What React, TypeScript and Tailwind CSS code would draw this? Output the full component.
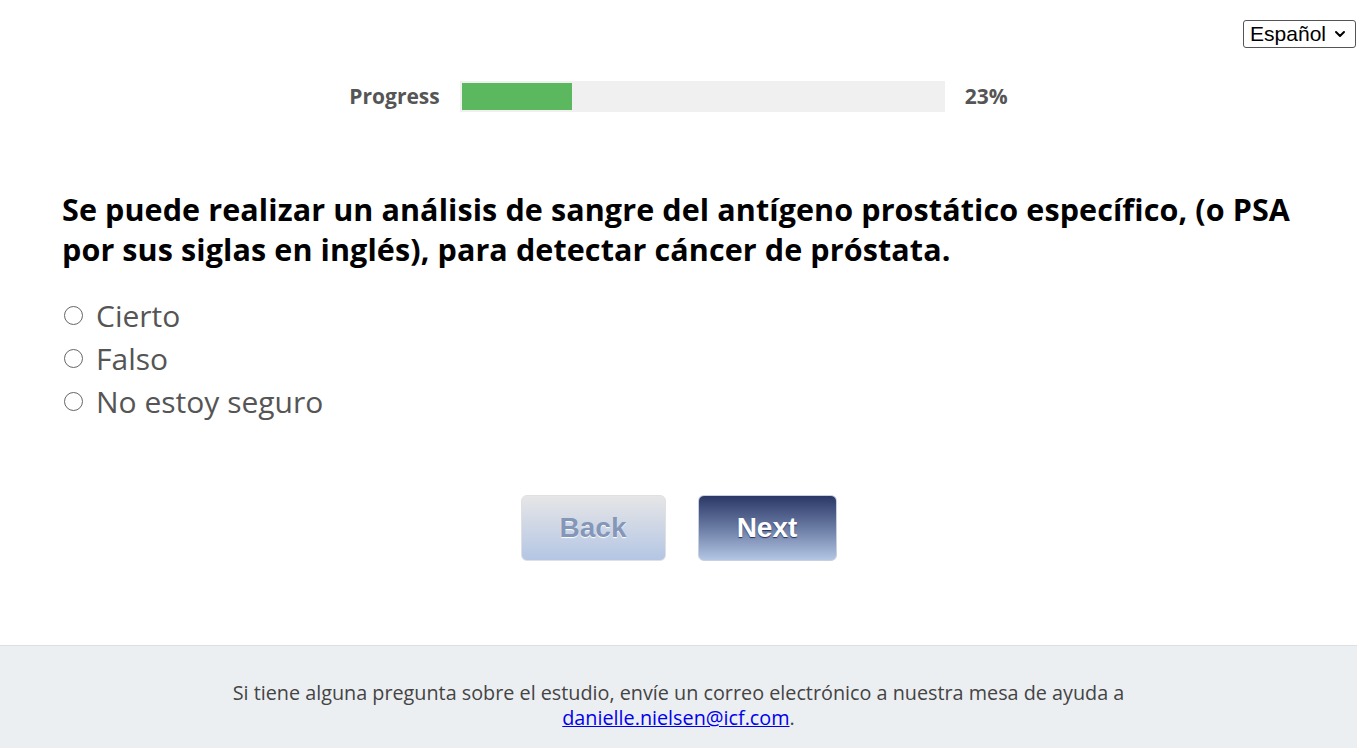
import { ChevronDown } from 'lucide-react'

const options = ['Cierto', 'Falso', 'No estoy seguro']

export default function App() {
  return (
    <div className="min-h-[748px] flex flex-col bg-white" style={{ fontFamily: '"Open Sans", sans-serif' }}>
      <div className="flex justify-end pt-[20px] pr-[1px]">
        <div className="flex items-center gap-[6px] h-[28px] pl-[6px] pr-[7px] border border-[#555] rounded-[3px] text-[21px] text-black" style={{ fontFamily: '"Liberation Sans", Arial, sans-serif' }}>
          Español
          <ChevronDown size={16} strokeWidth={3} />
        </div>
      </div>

      <div className="flex items-center justify-center gap-[20px] mt-[33px]">
        <span className="text-[21px] font-bold text-[#555]">Progress</span>
        <div className="w-[485px] h-[31px] bg-[#f0f0f0] p-[2px]">
          <div className="w-[23%] h-full bg-[#5cb85f]" />
        </div>
        <span className="text-[21px] font-bold text-[#555]">23%</span>
      </div>

      <div className="px-[62px] mt-[76px]">
        <h1 className="text-[30.5px] font-bold leading-[40px] tracking-[0.1px] text-black">
          Se puede realizar un análisis de sangre del antígeno prostático específico, (o PSA por sus siglas en inglés), para detectar cáncer de próstata.
        </h1>
        <div className="mt-[25px] flex flex-col">
          {options.map(o => (
            <label key={o} className="flex items-center h-[43px] text-[30px] text-[#555]">
              <span className="w-[19px] h-[19px] rounded-full border-[1.5px] border-[#666] ml-[2px] mr-[13px]" />
              {o}
            </label>
          ))}
        </div>
      </div>

      <div className="flex justify-center gap-[32px] mt-[72px]">
        <button className="w-[145px] h-[66px] rounded-[6px] border border-[#e0e0e0] bg-gradient-to-b from-[#e6e6e6] to-[#b4c6e4] text-[28px] font-bold text-[#8597b8]" style={{ fontFamily: '"Liberation Sans", Arial, sans-serif', textShadow: '0 1px 1px #fff' }}>
          Back
        </button>
        <button className="w-[139px] h-[66px] rounded-[6px] border border-[#c8d0e0] bg-gradient-to-b from-[#2b3867] to-[#b4c6e4] text-[28px] font-bold text-white" style={{ fontFamily: '"Liberation Sans", Arial, sans-serif', textShadow: '0 1px 1px #25305a' }}>
          Next
        </button>
      </div>

      <footer className="mt-auto h-[103px] bg-[#eceff2] border-t border-[#dcdfe3] flex flex-col items-center justify-center pt-[16px] text-[19.8px] leading-[25px] text-[#444] text-center">
        <p>Si tiene alguna pregunta sobre el estudio, envíe un correo electrónico a nuestra mesa de ayuda a</p>
        <p><a href="#" className="text-[#0000ee] underline">danielle.nielsen@icf.com</a>.</p>
      </footer>
    </div>
  )
}
